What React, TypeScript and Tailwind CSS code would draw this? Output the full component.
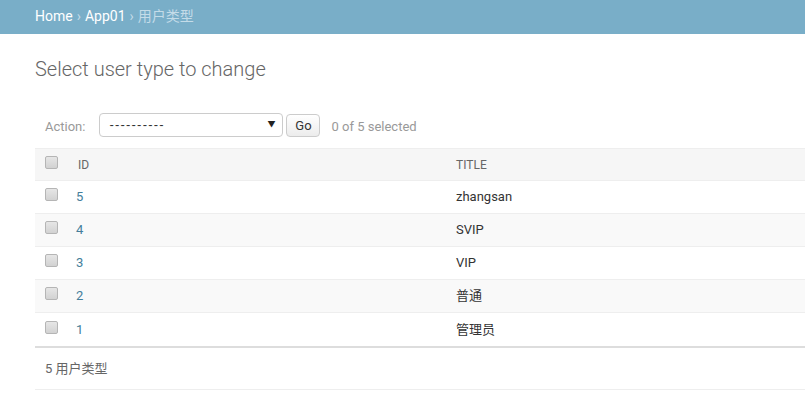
import React from 'react';

const rows = [
  { id: 5, title: 'zhangsan' },
  { id: 4, title: 'SVIP' },
  { id: 3, title: 'VIP' },
  { id: 2, title: '普通' },
  { id: 1, title: '管理员' },
];

function Box() {
  return (
    <div className="w-[13px] h-[13px] -mt-[5px] rounded-[2px] border border-[#b5b5b5] bg-gradient-to-b from-[#e6e6e6] to-[#d2d2d2]" />
  );
}

export default function App() {
  return (
    <div
      className="w-[805px] h-[398px] overflow-hidden bg-white text-[13px] text-[#333]"
      style={{ fontFamily: 'Roboto, "Noto Sans CJK SC", sans-serif' }}
    >
      {/* Breadcrumbs */}
      <div className="h-[34px] bg-[#79aec8] px-[35px] flex items-center text-[14px] text-[#c4dce8]">
        <span className="text-white -mt-[2px]">Home</span>
        <span className="mx-[4px] -mt-[2px]">›</span>
        <span className="text-white -mt-[2px]">App01</span>
        <span className="mx-[4px] -mt-[2px]">›</span>
        <span className="-mt-[2px]">用户类型</span>
      </div>

      <div className="pl-[35px] w-[1000px]">
        <h1 className="text-[20px] font-light text-[#666] mt-[23px] mb-[26px] leading-[24px]">
          Select user type to change
        </h1>

        {/* Actions */}
        <div className="h-[41px] flex items-start pt-[6px] pl-[10px] text-[13px]">
          <span className="text-[#999] mr-[14px] mt-[4px]">Action:</span>
          <div className="w-[184px] h-[24px] border border-[#ccc] rounded-[4px] flex items-center justify-between pl-[9px] pr-[7px] text-[#333]">
            <span className="tracking-[1.2px]" style={{ fontFamily: '"Liberation Sans", sans-serif' }}>----------</span>
            <span className="text-[8px] text-[#222]">▼</span>
          </div>
          <div className="ml-[3px] mt-[1px] w-[34px] h-[23px] border border-[#ccc] rounded-[4px] bg-gradient-to-b from-white to-[#ececec] flex items-center justify-center text-[#333]">
            Go
          </div>
          <span className="ml-[11px] mt-[4px] text-[#999]">0 of 5 selected</span>
        </div>

        {/* Table */}
        <div className="border-b-2 border-[#ddd]">
          <div className="h-[33px] bg-[#f6f6f6] border-y border-[#eee] flex items-center text-[12px] uppercase text-[#666]">
            <div className="w-[40px] pl-[10px] flex items-center">
              <Box />
            </div>
            <div className="w-[381px] pl-[3px]">ID</div>
            <div>Title</div>
          </div>
          {rows.map((r, i) => (
            <div
              key={r.id}
              className={`h-[33px] flex items-center border-b border-[#eee] last:border-b-0 ${i % 2 === 1 ? 'bg-[#f9f9f9]' : 'bg-white'}`}
            >
              <div className="w-[40px] pl-[10px] flex items-center">
                <Box />
              </div>
              <div className="w-[381px] pl-[1px] text-[#447e9b]">{r.id}</div>
              <div>{r.title}</div>
            </div>
          ))}
        </div>

        {/* Paginator */}
        <div className="h-[42px] border-b border-[#eee] flex items-center pl-[10px] text-[#666]">
          5 用户类型
        </div>
      </div>
    </div>
  );
}
